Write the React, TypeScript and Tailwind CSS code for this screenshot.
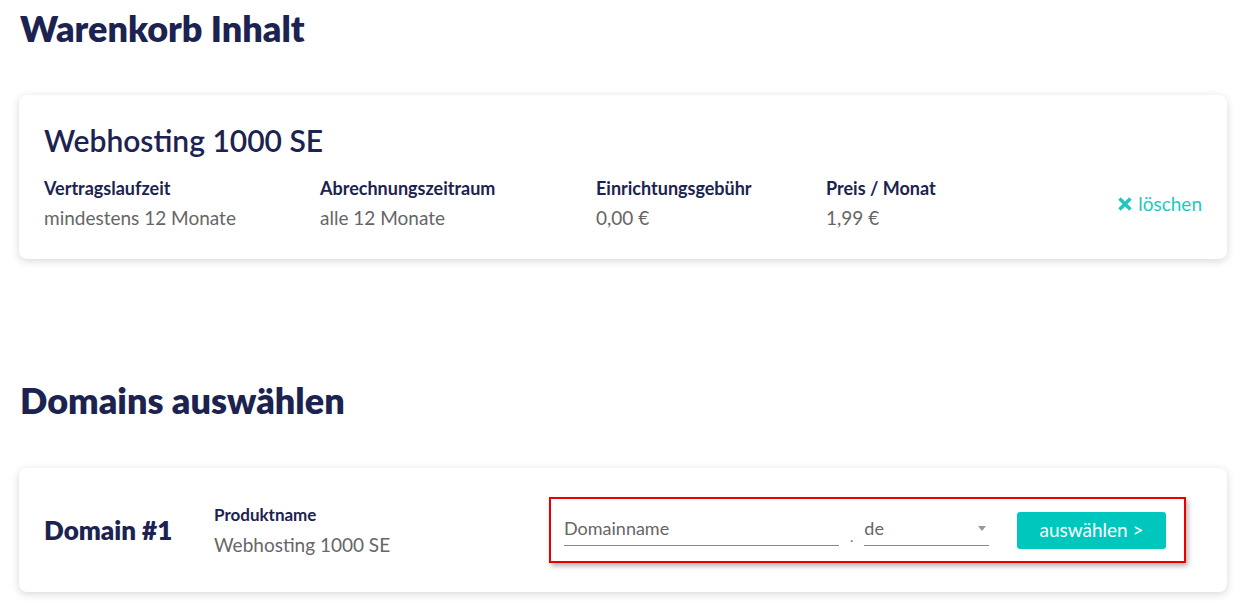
import React from 'react';

const font = { fontFamily: '"Lato", "Open Sans", sans-serif' };

const Info = ({ label, value, className = '' }: { label: string; value: string; className?: string }) => (
  <div className={className}>
    <p className="text-[18px] font-bold leading-[30px] text-[#1c2350]">{label}</p>
    <p className="text-[19px] leading-[30px] text-[#666]">{value}</p>
  </div>
);

const App: React.FC = () => {
  return (
    <div className="min-h-screen bg-white px-[19px] font-['Lato'] antialiased" style={font}>
      {/* Warenkorb */}
      <h1 className="pt-[6px] pl-px text-[36px] font-extrabold leading-[44px] text-[#1c2350]">Warenkorb Inhalt</h1>

      <div className="mt-[45px] w-[1208px] rounded-lg bg-white px-[25px] pt-[20px] pb-[26px] shadow-[0_2px_8px_rgba(0,0,0,0.16)]">
        <h2 className="text-[30px] font-semibold leading-[50px] text-[#1c2350]">Webhosting 1000 SE</h2>
        <div className="mt-[8px] flex items-center">
          <Info label="Vertragslaufzeit" value="mindestens 12 Monate" className="w-[276px]" />
          <Info label="Abrechnungszeitraum" value="alle 12 Monate" className="w-[276px]" />
          <Info label="Einrichtungsgebühr" value="0,00 €" className="w-[230px]" />
          <Info label="Preis / Monat" value="1,99 €" />
          <button className="ml-auto mt-[2px] flex items-center gap-[5px] text-[19px] text-[#1ec8c0]">
            <svg width="16" height="16" viewBox="0 0 16 16">
              <path d="M2.5 2.5 L13.5 13.5 M13.5 2.5 L2.5 13.5" stroke="#1ec8c0" strokeWidth="3.4" strokeLinecap="butt" />
            </svg>
            löschen
          </button>
        </div>
      </div>

      {/* Domains */}
      <h1 className="mt-[119px] pl-px text-[36px] font-extrabold leading-[44px] text-[#1c2350]">Domains auswählen</h1>

      <div className="mt-[46px] flex h-[124px] w-[1208px] items-center rounded-lg bg-white pl-[25px] shadow-[0_2px_8px_rgba(0,0,0,0.16)]">
        <p className="w-[170px] text-[26px] font-extrabold text-[#1c2350]">Domain #1</p>
        <div className="w-[335px]">
          <p className="text-[17px] font-bold leading-[30px] text-[#1c2350]">Produktname</p>
          <p className="text-[19px] leading-[30px] text-[#666]">Webhosting 1000 SE</p>
        </div>
        <div className="flex h-[66px] w-[637px] items-center border-2 border-[#e60000] pl-[13px] pr-[18px] shadow-[2px_3px_5px_rgba(0,0,0,0.3)]">
          <div className="w-[275px] border-b border-[#8a8a8a] pb-[3px] text-[18px] text-[#666]">Domainname</div>
          <span className="mx-[11px] mt-[12px] text-[14px] text-[#666]">.</span>
          <div className="flex w-[125px] items-center justify-between border-b border-[#8a8a8a] pb-[3px] text-[18px] text-[#666]">
            <span>de</span>
            <span className="mr-[3px] h-0 w-0 border-x-[4px] border-t-[5px] border-x-transparent border-t-[#999]" />
          </div>
          <button className="ml-auto h-[37px] w-[149px] rounded-[3px] bg-[#00c7bd] text-[19px] text-white">auswählen &gt;</button>
        </div>
      </div>
    </div>
  );
};

export default App;
